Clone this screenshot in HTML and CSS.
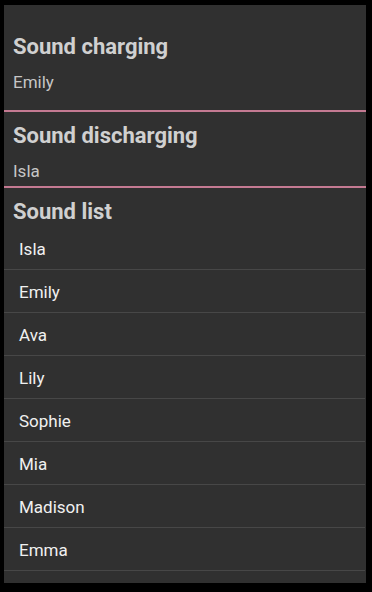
FILE: index.html
```html
<!DOCTYPE html>
<html>
<head>
<meta charset="utf-8">
<link rel="stylesheet" href="styles.css">
</head>
<body>
<div class="panel">
  <section class="pref pref-first">
    <div class="pref-title">Sound charging</div>
    <div class="pref-summary">Emily</div>
  </section>
  <section class="pref pref-second">
    <div class="pref-title">Sound discharging</div>
    <div class="pref-summary">Isla</div>
  </section>
  <section class="list-section">
    <div class="pref-title">Sound list</div>
    <ul class="sound-list">
      <li>Isla</li>
      <li>Emily</li>
      <li>Ava</li>
      <li>Lily</li>
      <li>Sophie</li>
      <li>Mia</li>
      <li>Madison</li>
      <li>Emma</li>
    </ul>
  </section>
</div>
</body>
</html>
```
FILE: styles.css
```css
html, body {
  margin: 0;
  padding: 0;
  background: #000;
}
body {
  font-family: Roboto, "Noto Sans", sans-serif;
}
.panel {
  margin: 5px 6px 0 4px;
  height: 578px;
  background: #303030;
  overflow: hidden;
  display: flex;
  flex-direction: column;
}
.pref {
  border-bottom: 2px solid #c47a92;
  padding-left: 9px;
}
.pref-first {
  padding-top: 29px;
  padding-bottom: 18px;
}
.pref-second {
  padding-top: 11px;
  padding-bottom: 5px;
}
.pref-title {
  font-size: 22px;
  line-height: 26px;
  font-weight: 700;
  color: #d0d0d0;
}
.pref-summary {
  margin-top: 12px;
  font-size: 17px;
  line-height: 20px;
  color: #c6c6c6;
}
.list-section {
  padding-top: 11px;
}
.list-section .pref-title {
  padding-left: 9px;
  margin-bottom: 2px;
}
.sound-list {
  list-style: none;
  margin: 0;
  padding: 0 1px 0 0;
}
.sound-list li {
  padding: 12px 0 10px 15px;
  font-size: 17px;
  line-height: 20px;
  color: #f0f0f0;
  border-bottom: 1px solid #474747;
}
```
